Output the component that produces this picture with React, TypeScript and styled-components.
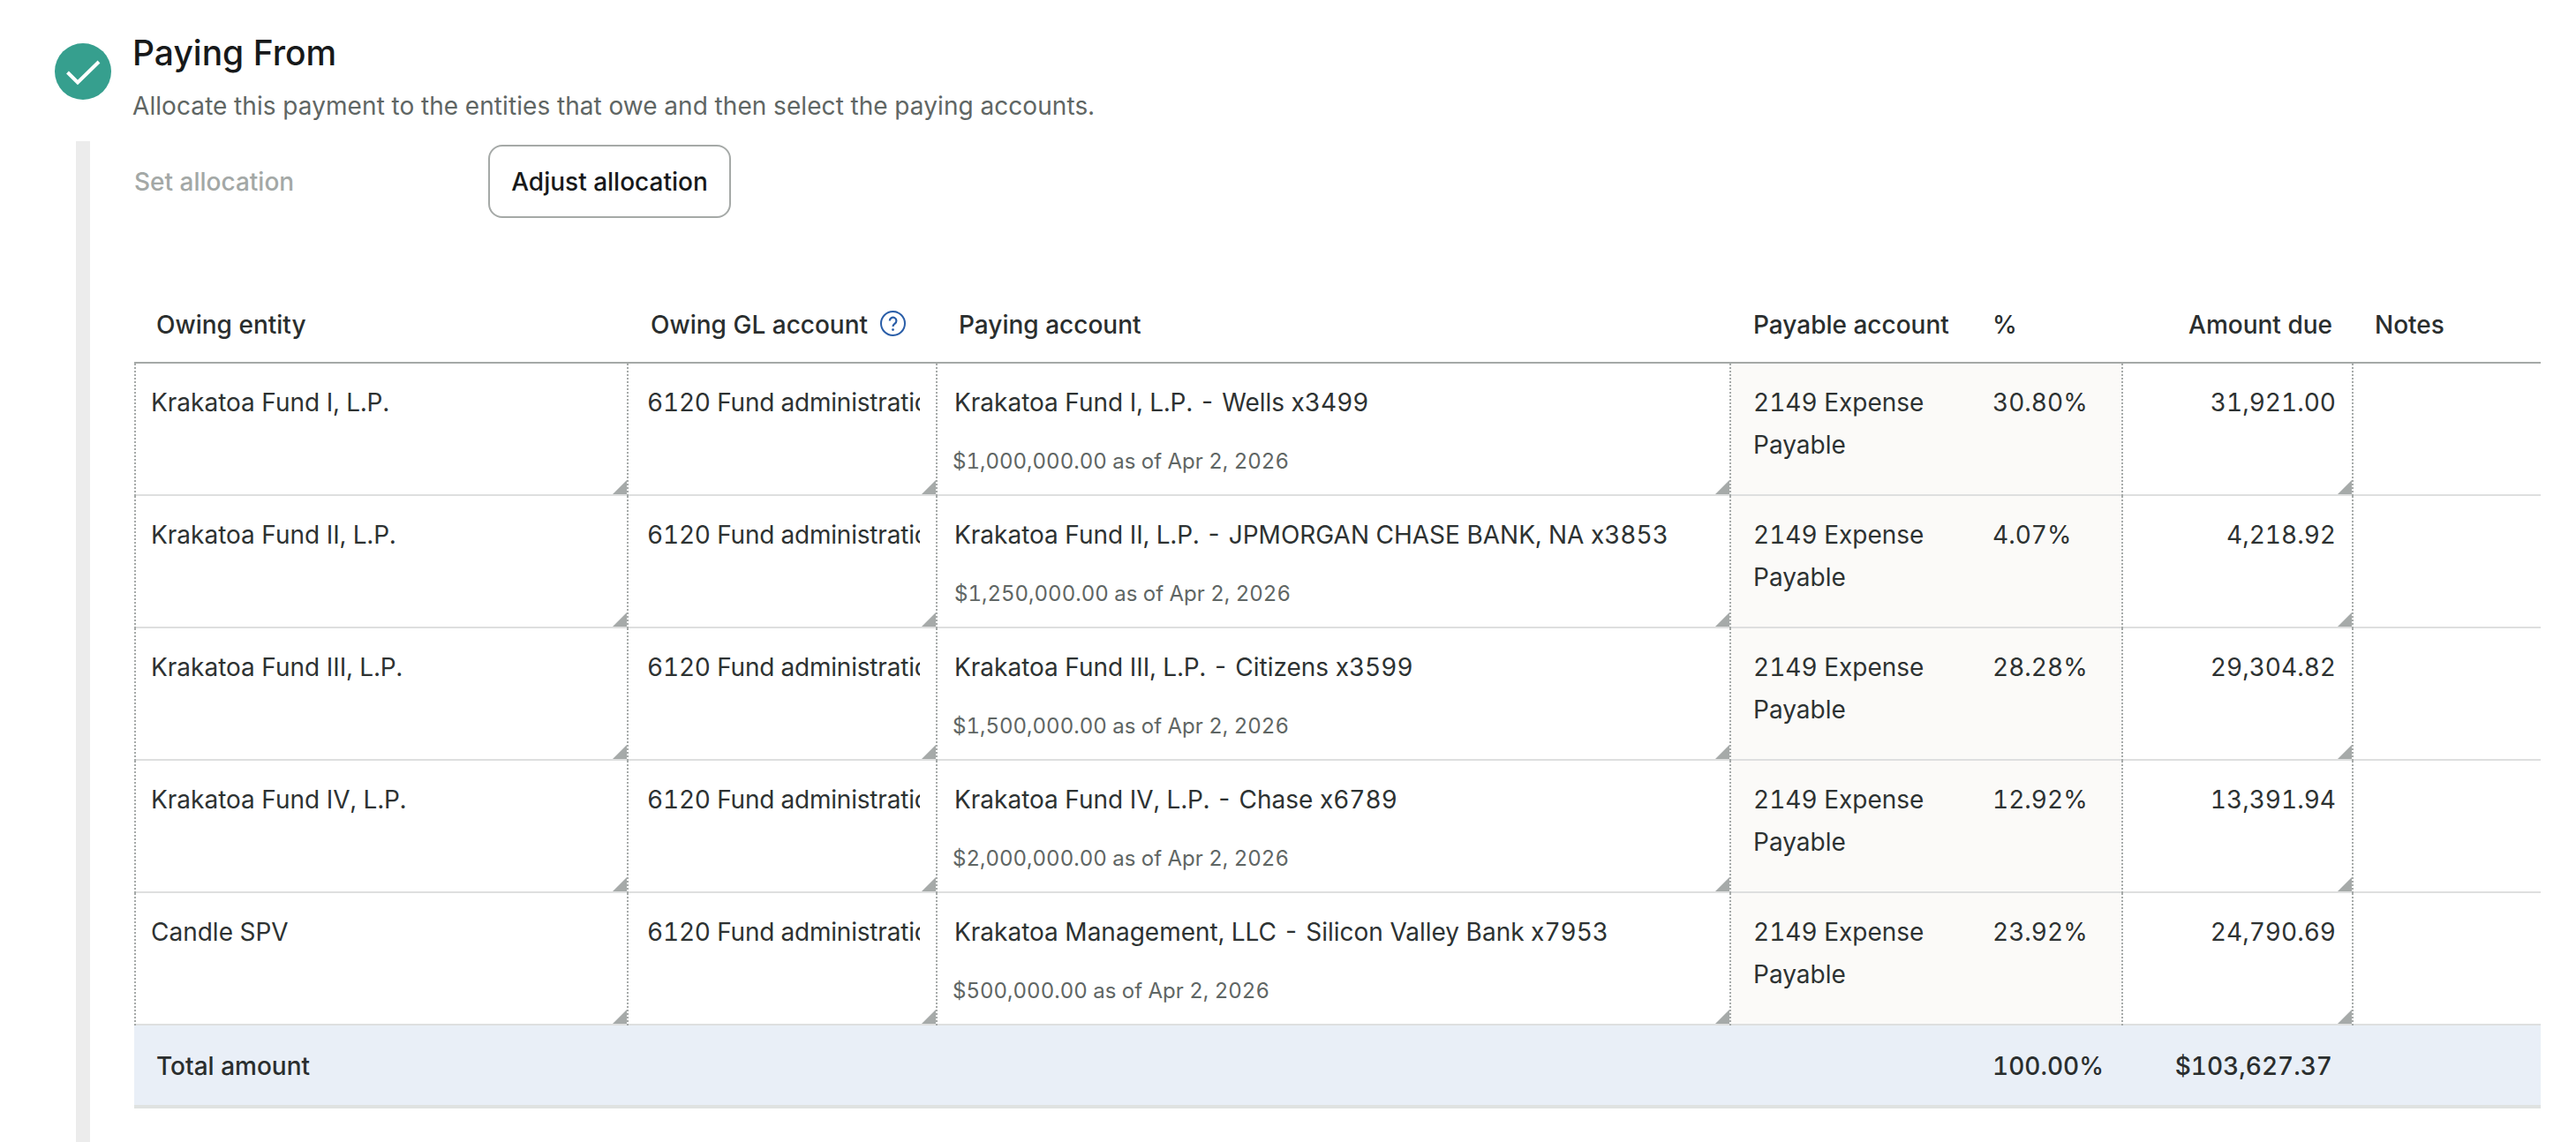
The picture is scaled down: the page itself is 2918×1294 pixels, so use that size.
import React from "react";
import styled, { createGlobalStyle } from "styled-components";

const Global = createGlobalStyle`
  html, body { margin: 0; padding: 0; background: #fff; }
  body {
    font-family: Inter, "Noto Sans", sans-serif;
    font-variant-numeric: tabular-nums;
    color: #2d3232;
    overflow: hidden;
  }
`;

const Page = styled.div`
  display: flex;
  flex-direction: column;
  height: 1294px;
  box-sizing: border-box;
  padding: 36px 40px 0 62px;
`;

const StepHeader = styled.header`
  display: flex;
  gap: 24px;
  height: 124px;
`;

const StepBadge = styled.div`
  width: 64px;
  height: 64px;
  margin-top: 13px;
  border-radius: 50%;
  background: #369f8e;
  display: flex;
  align-items: center;
  justify-content: center;
  flex: none;
`;

const StepText = styled.div`
  display: flex;
  flex-direction: column;
`;

const Title = styled.h2`
  margin: 0;
  font-size: 39px;
  line-height: 48px;
  font-weight: 500;
  color: #17191a;
`;

const Subtitle = styled.p`
  margin: 16px 0 0;
  font-size: 28px;
  line-height: 40px;
  font-weight: 400;
  letter-spacing: 0.08px;
  color: #5f6664;
`;

const StepBody = styled.section`
  flex: 1;
  margin-left: 24px;
  border-left: 16px solid #ececec;
  padding: 4px 0 0 50px;
`;

const Toolbar = styled.div`
  display: flex;
  align-items: center;
  height: 83px;
  margin-bottom: 83px;
`;

const ToolbarLabel = styled.span`
  width: 401px;
  font-size: 28px;
  font-weight: 500;
  color: #a3a8a6;
`;

const OutlineButton = styled.button`
  width: 275px;
  height: 83px;
  box-sizing: border-box;
  background: #fff;
  border: 2px solid #a5a9a7;
  border-radius: 16px;
  font-family: inherit;
  font-size: 28px;
  font-weight: 500;
  color: #17191a;
  padding: 0;
`;

const COLS = "560px 350px 899px 280px 164px 261px 212px";

const GridRow = styled.div`
  display: grid;
  grid-template-columns: ${COLS};
`;

const HeadRow = styled(GridRow)`
  height: 80px;
  border-bottom: 2px solid #a5a9a7;
  font-size: 28px;
  line-height: 48px;
  font-weight: 500;
  color: #2a2e2e;
`;

const HeadCell = styled.div<{ $pad: number; $right?: number }>`
  display: flex;
  align-items: flex-start;
  gap: 14px;
  padding-top: 14px;
  padding-left: ${(p) => p.$pad}px;
  padding-right: ${(p) => p.$right ?? 0}px;
  justify-content: ${(p) => (p.$right !== undefined ? "flex-end" : "flex-start")};
`;

const HelpIcon = styled.svg`
  width: 29px;
  height: 29px;
  margin-top: 8px;
  flex: none;
`;

const BodyRow = styled(GridRow)`
  height: 150px;
  box-sizing: border-box;
  border-bottom: 2px solid #dedfdf;
  font-size: 28px;
  line-height: 48px;
  font-weight: 420;
  color: #2d3232;
`;

const Cell = styled.div<{ $pad: number; $left?: boolean; $tint?: boolean; $divider?: boolean; $handle?: boolean }>`
  position: relative;
  box-sizing: border-box;
  min-width: 0;
  padding-top: 20px;
  padding-left: ${(p) => p.$pad}px;
  margin-bottom: -2px;
  background: ${(p) =>
    p.$tint ? "linear-gradient(#fbfaf8, #fbfaf8) no-repeat 0 0 / 100% calc(100% - 2px)" : "transparent"};
  border-right: ${(p) => (p.$divider ? "2px dotted #a6aaa9" : "none")};
  border-left: ${(p) => (p.$left ? "2px dotted #a6aaa9" : "none")};
  ${(p) =>
    p.$handle &&
    `&::after {
      content: "";
      position: absolute;
      right: 0;
      bottom: 2px;
      width: 16px;
      height: 16px;
      background: #a6aaa9;
      clip-path: polygon(100% 0, 100% 100%, 0 100%);
    }`}
`;

const Clipped = styled.div`
  width: 309px;
  overflow: hidden;
  white-space: nowrap;
  letter-spacing: -0.2px;
`;

const AccountLine = styled.div`
  padding-left: 11px;
  white-space: nowrap;
`;

const BalanceLine = styled.div<{ $nudge: number }>`
  margin-top: 25px;
  padding-left: ${(p) => p.$nudge}px;
  font-size: 24px;
  line-height: 36px;
  color: #5f6664;
  white-space: nowrap;
`;

const AmountCell = styled(Cell)`
  text-align: right;
  padding-left: 0;
  padding-right: 18px;
`;

const TotalRow = styled(GridRow)`
  height: 94px;
  box-sizing: border-box;
  background: #e9eff7;
  border-bottom: 4px solid #dfe2e1;
  font-size: 28px;
  line-height: 48px;
  font-weight: 500;
  color: #2a2e2e;
`;

const TotalCell = styled.div<{ $pad?: number; $right?: number; $span?: number }>`
  padding-top: 22px;
  padding-left: ${(p) => p.$pad ?? 0}px;
  padding-right: ${(p) => p.$right ?? 0}px;
  text-align: ${(p) => (p.$right !== undefined ? "right" : "left")};
  grid-column: span ${(p) => p.$span ?? 1};
`;

const rows = [
  { entity: "Krakatoa Fund I, L.P.", account: "Krakatoa Fund I, L.P. - Wells x3499", balance: "$1,000,000.00 as of Apr 2, 2026", pct: "30.80%", amt: "31,921.00", nudge: 9 },
  { entity: "Krakatoa Fund II, L.P.", account: "Krakatoa Fund II, L.P. - JPMORGAN CHASE BANK, NA x3853", balance: "$1,250,000.00 as of Apr 2, 2026", pct: "4.07%", amt: "4,218.92", nudge: 11 },
  { entity: "Krakatoa Fund III, L.P.", account: "Krakatoa Fund III, L.P. - Citizens x3599", balance: "$1,500,000.00 as of Apr 2, 2026", pct: "28.28%", amt: "29,304.82", nudge: 9 },
  { entity: "Krakatoa Fund IV, L.P.", account: "Krakatoa Fund IV, L.P. - Chase x6789", balance: "$2,000,000.00 as of Apr 2, 2026", pct: "12.92%", amt: "13,391.94", nudge: 9 },
  { entity: "Candle SPV", account: "Krakatoa Management, LLC - Silicon Valley Bank x7953", balance: "$500,000.00 as of Apr 2, 2026", pct: "23.92%", amt: "24,790.69", nudge: 9 },
];

export default function App() {
  return (
    <>
      <Global />
      <Page>
        <StepHeader>
          <StepBadge>
            <svg width="40" height="40" viewBox="0 0 40 40" fill="none">
              <path d="M2.5 21 L14 32.5 L38 9" stroke="#fff" strokeWidth="4" />
            </svg>
          </StepBadge>
          <StepText>
            <Title>Paying From</Title>
            <Subtitle>Allocate this payment to the entities that owe and then select the paying accounts.</Subtitle>
          </StepText>
        </StepHeader>
        <StepBody>
          <Toolbar>
            <ToolbarLabel>Set allocation</ToolbarLabel>
            <OutlineButton>Adjust allocation</OutlineButton>
          </Toolbar>
          <HeadRow>
            <HeadCell $pad={25}>Owing entity</HeadCell>
            <HeadCell $pad={25}>
              Owing GL account
              <HelpIcon viewBox="0 0 29 29" fill="none">
                <circle cx="14.5" cy="14.5" r="13.5" stroke="#2a5ea8" strokeWidth="2" />
                <path d="M10.8 11.5a3.8 3.8 0 1 1 5.8 3.2c-1.4.9-2.1 1.5-2.1 3.3" stroke="#2a5ea8" strokeWidth="2.2" />
                <circle cx="14.5" cy="21.6" r="1.4" fill="#2a5ea8" />
              </HelpIcon>
            </HeadCell>
            <HeadCell $pad={24}>Paying account</HeadCell>
            <HeadCell $pad={25}>Payable account</HeadCell>
            <HeadCell $pad={16}>%</HeadCell>
            <HeadCell $pad={0} $right={24}>Amount due</HeadCell>
            <HeadCell $pad={24}>Notes</HeadCell>
          </HeadRow>
          {rows.map((r) => (
            <BodyRow key={r.entity}>
              <Cell $pad={17} $left $divider $handle>{r.entity}</Cell>
              <Cell $pad={21} $divider $handle>
                <Clipped>6120 Fund administration</Clipped>
              </Cell>
              <Cell $pad={8} $divider $handle>
                <AccountLine>{r.account}</AccountLine>
                <BalanceLine $nudge={r.nudge}>{r.balance}</BalanceLine>
              </Cell>
              <Cell $pad={25} $tint>2149 Expense Payable</Cell>
              <Cell $pad={16} $tint $divider>{r.pct}</Cell>
              <AmountCell $pad={0} $divider $handle>{r.amt}</AmountCell>
              <Cell $pad={0} />
            </BodyRow>
          ))}
          <TotalRow>
            <TotalCell $pad={25} $span={3}>Total amount</TotalCell>
            <TotalCell />
            <TotalCell $pad={16}>100.00%</TotalCell>
            <TotalCell $right={24}>$103,627.37</TotalCell>
            <TotalCell />
          </TotalRow>
        </StepBody>
      </Page>
    </>
  );
}
